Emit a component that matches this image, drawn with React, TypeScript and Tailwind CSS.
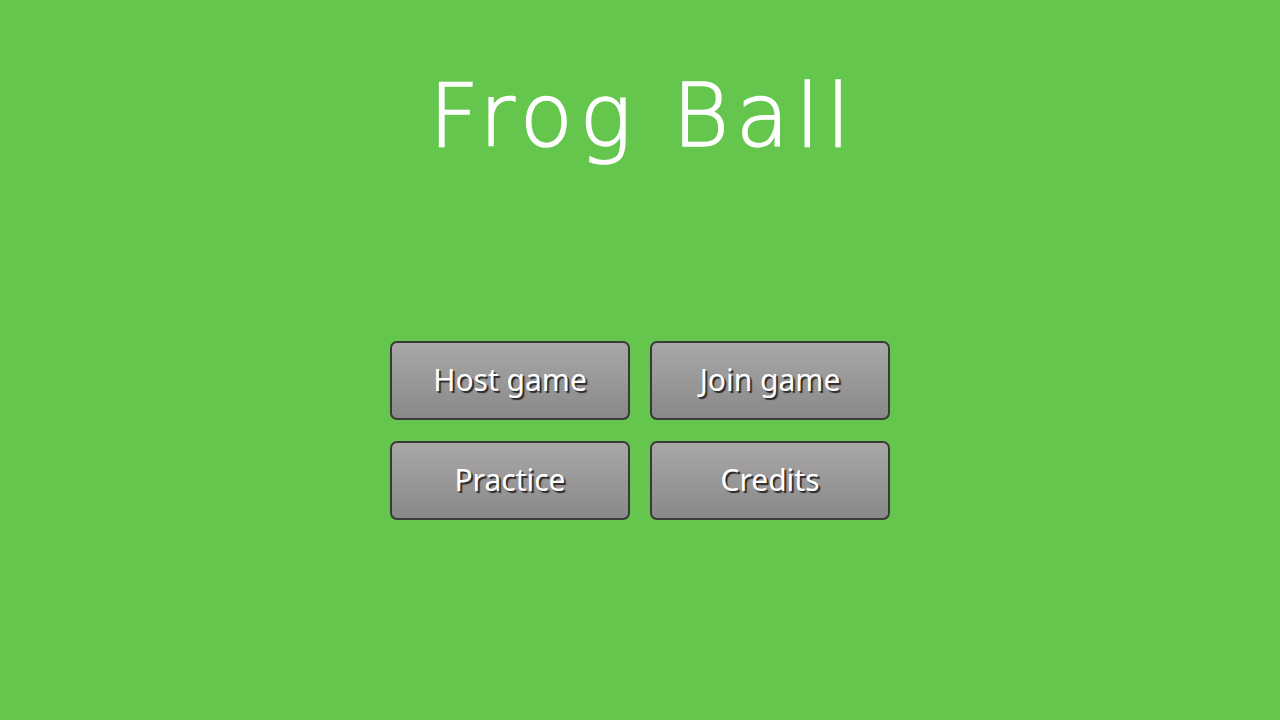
export default function App() {
  const buttons = ['Host game', 'Join game', 'Practice', 'Credits']

  return (
    <div className="flex h-[720px] w-[1280px] flex-col items-center bg-[#64c64c]">
      <h1 className="mt-[61px] pl-[6px] text-[87px] font-extralight leading-[110px] tracking-[6.5px] text-white [-webkit-text-stroke:1.5px_white] [font-family:'DejaVu_Sans',sans-serif]">
        Frog Ball
      </h1>

      <div className="mt-[170px] grid grid-cols-2 gap-x-[20px] gap-y-[21px]">
        {buttons.map((label) => (
          <button
            key={label}
            className="flex h-[79px] w-[240px] items-center justify-center rounded-[7px] border-2 border-[#3a3a3a] bg-gradient-to-b from-[#a9a7a8] to-[#8a898a] pb-[2px] text-[30px] text-white [font-family:'Noto_Sans','Open_Sans',sans-serif] [text-shadow:2px_2px_1px_#2a2a2a]"
          >
            {label}
          </button>
        ))}
      </div>
    </div>
  )
}
